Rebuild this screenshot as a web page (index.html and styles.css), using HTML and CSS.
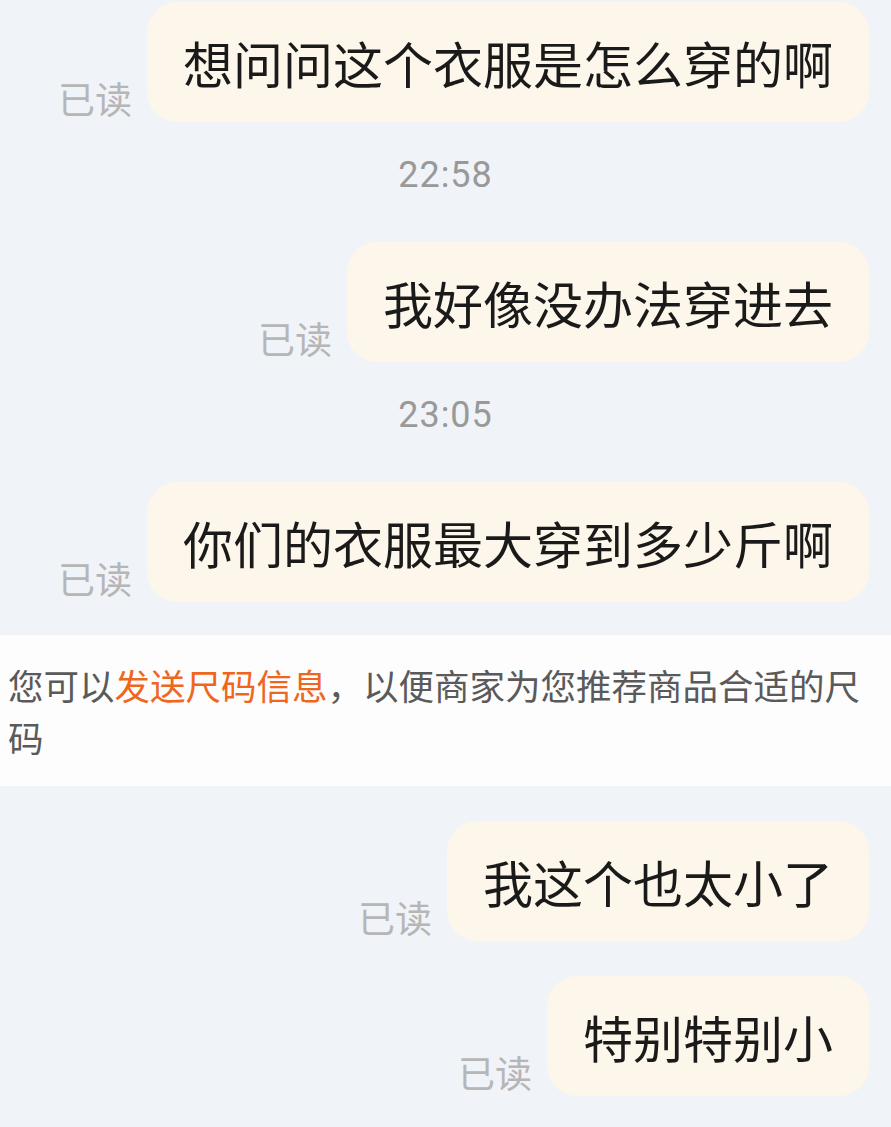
FILE: index.html
```html
<!DOCTYPE html>
<html lang="zh-CN">
<head>
  <meta charset="UTF-8" />
  <meta name="viewport" content="width=device-width, initial-scale=1.0"/>
  <title>聊天记录</title>
  <link rel="stylesheet" href="styles.css">
</head>
<body>

<div class="chat">
  <div class="row first">
    <span class="read">已读</span>
    <div class="bubble">想问问这个衣服是怎么穿的啊</div>
  </div>

  <div class="time">22:58</div>

  <div class="row">
    <span class="read">已读</span>
    <div class="bubble">我好像没办法穿进去</div>
  </div>

  <div class="time">23:05</div>

  <div class="row">
    <span class="read">已读</span>
    <div class="bubble">你们的衣服最大穿到多少斤啊</div>
  </div>

  <p class="notice">您可以<span class="link">发送尺码信息</span>，以便商家为您推荐商品合适的尺码</p>

  <div class="row">
    <span class="read">已读</span>
    <div class="bubble">我这个也太小了</div>
  </div>

  <div class="row">
    <span class="read">已读</span>
    <div class="bubble">特别特别小</div>
  </div>
</div>

</body>
</html>
```

FILE: styles.css
```css
body {
  margin: 0;
  background: #f0f3f7;
  font-family: "Noto Sans CJK SC", "Noto Sans", sans-serif;
  color: #1a1a1a;
}

.chat {
  padding-bottom: 34px;
}

.row {
  display: flex;
  justify-content: flex-end;
  align-items: flex-end;
  padding-right: 22px;
  margin-top: 35px;
}

.row.first {
  margin-top: 2px;
}

.bubble {
  background: #fdf6ea;
  border-radius: 30px;
  padding: 30px 36px;
  font-size: 50px;
  line-height: 60px;
  white-space: nowrap;
}

.read {
  font-size: 37px;
  line-height: 44px;
  color: #b6b6b6;
  margin-right: 15px;
  margin-bottom: 2px;
}

.time {
  text-align: center;
  font-family: Roboto, "Noto Sans", sans-serif;
  font-size: 36px;
  line-height: 44px;
  letter-spacing: 1px;
  color: #999;
  margin-top: 31px;
}

.time + .row {
  margin-top: 45px;
}

.notice {
  margin: 33px 0 0;
  background: #fdfdfd;
  padding: 24px 8px 23px;
  font-size: 35.5px;
  line-height: 52px;
  color: #5a5a5a;
}

.notice + .row {
  margin-top: 35px;
}

.link {
  color: #ef661d;
}
```
